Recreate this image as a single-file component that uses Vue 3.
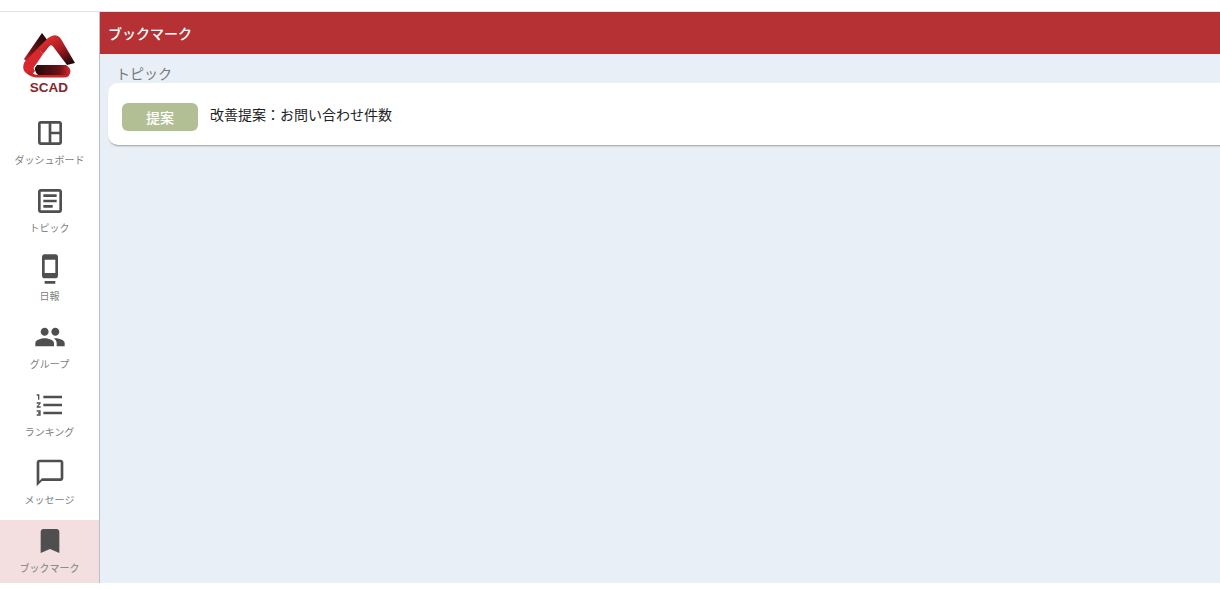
<template>
  <div class="page">
    <div class="top-strip"></div>
    <div class="main">
      <nav class="sidebar">
        <div class="logo">
          <svg class="logo-mark" viewBox="0 0 54 46" width="54" height="46">
            <defs>
              <linearGradient id="leftEar" x1="0.7" y1="0" x2="0.2" y2="1">
                <stop offset="0" stop-color="#1f070a" />
                <stop offset="0.6" stop-color="#6e1218" />
                <stop offset="1" stop-color="#c8242a" />
              </linearGradient>
              <linearGradient id="rightBand" x1="0.2" y1="0.1" x2="0.9" y2="0.9">
                <stop offset="0" stop-color="#e0302f" />
                <stop offset="0.5" stop-color="#a81c22" />
                <stop offset="1" stop-color="#24090c" />
              </linearGradient>
              <linearGradient id="lowerBand" x1="0" y1="0" x2="1" y2="0">
                <stop offset="0" stop-color="#24090c" />
                <stop offset="0.7" stop-color="#6d1218" />
                <stop offset="1" stop-color="#d8292d" />
              </linearGradient>
            </defs>
            <path d="M19 0 L1 26 L6 31 L25 8 Z" fill="url(#leftEar)" />
            <path d="M25 5 Q33 -1 38 6 L52 30 L44 32 L30 13.500 Q28 11 26 13.500 L20 21 L15 15 Z" fill="url(#rightBand)" />
            <path d="M15 15 L20 21 L14 30 L11 34 Q10 36 12 38 L8 43 Q-3 39 1.500 29 Z" fill="#d6282e" />
            <path d="M14 32 L43 32 Q49 36 47 40 Q46 43 43 43 L16 43 Q9 37 14 32 Z" fill="url(#lowerBand)" />
            <path d="M7 38 Q10 42 16 42 L43 42 Q46 42 47 39 Q47 44.500 41 44.500 L13 44.500 Q8 44 4 40 Z" fill="#c92428" />
          </svg>
          <span class="logo-text">SCAD</span>
        </div>
        <a
          v-for="item in navItems"
          :key="item.label"
          class="nav-item"
          :class="{ active: item.active }"
        >
          <svg class="nav-icon" viewBox="0 0 24 24" width="32" height="32">
            <path :d="item.icon" />
          </svg>
          <span class="nav-label">{{ item.label }}</span>
        </a>
      </nav>
      <div class="content">
        <header class="title-bar">ブックマーク</header>
        <div class="section-label">トピック</div>
        <div class="topic-card">
          <span class="badge">提案</span>
          <span class="topic-title">改善提案：お問い合わせ件数</span>
        </div>
      </div>
    </div>
  </div>
</template>

<script setup>
const navItems = [
  {
    label: 'ダッシュボード',
    icon: 'M19 3H5c-1.1 0-2 .9-2 2v14c0 1.100.9 2 2 2h14c1.100 0 2-.9 2-2V5c0-1.100-.9-2-2-2zM5 19V5h6v14H5zm14 0h-6v-6h6v6zm0-8h-6V5h6v6z'
  },
  {
    label: 'トピック',
    icon: 'M19 5v14H5V5h14m0-2H5c-1.100 0-2 .9-2 2v14c0 1.100.9 2 2 2h14c1.100 0 2-.9 2-2V5c0-1.100-.9-2-2-2zM14 17H7v-2h7v2zm3-4H7v-2h10v2zm0-4H7V7h10v2z'
  },
  {
    label: '日報',
    icon: 'M8 23h8v-2H8v2zm8-21.990L8 1c-1.100 0-2 .9-2 2v14c0 1.100.9 2 2 2h8c1.100 0 2-.9 2-2V3c0-1.100-.9-1.990-2-1.990zM16 15H8V5h8v10z'
  },
  {
    label: 'グループ',
    icon: 'M16 11c1.660 0 2.990-1.340 2.990-3S17.660 5 16 5c-1.660 0-3 1.340-3 3s1.340 3 3 3zm-8 0c1.660 0 2.990-1.340 2.990-3S9.660 5 8 5C6.340 5 5 6.340 5 8s1.340 3 3 3zm0 2c-2.330 0-7 1.170-7 3.500V19h14v-2.500c0-2.330-4.670-3.500-7-3.500zm8 0c-.29 0-.62.02-.97.05 1.160.84 1.970 1.970 1.970 3.450V19h6v-2.500c0-2.330-4.670-3.500-7-3.500z'
  },
  {
    label: 'ランキング',
    icon: 'M2 17h2v.5H3v1h1v.5H2v1h3v-4H2v1zm1-9h1V4H2v1h1v3zm-1 3h1.800L2 13.100v.9h3v-1H3.200L5 10.900V10H2v1zm5-6v2h14V5H7zm0 14h14v-2H7v2zm0-6h14v-2H7v2z'
  },
  {
    label: 'メッセージ',
    icon: 'M20 2H4c-1.100 0-2 .9-2 2v18l4-4h14c1.100 0 2-.9 2-2V4c0-1.100-.9-2-2-2zm0 14H6l-2 2V4h16v12z'
  },
  {
    label: 'ブックマーク',
    active: true,
    icon: 'M17 3H7c-1.100 0-1.990.9-1.990 2L5 21l7-3 7 3V5c0-1.100-.9-2-2-2z'
  }
]
</script>

<style>
html,
body {
  margin: 0;
  background: #fff;
  overflow: hidden;
}
</style>

<style scoped>
.page {
  height: 589px;
  overflow: hidden;
  background: #fff;
  font-family: "Noto Sans CJK JP", "Noto Sans", sans-serif;
}

.top-strip {
  height: 11px;
  border-bottom: 1px solid #e3e3e3;
}

.main {
  display: flex;
  height: 571px;
  overflow: hidden;
}

.sidebar {
  flex: 0 0 99px;
  border-right: 1px solid #bcc0c6;
  display: flex;
  flex-direction: column;
  overflow: hidden;
}

.logo {
  flex: 0 0 100px;
  display: flex;
  flex-direction: column;
  align-items: center;
  padding-top: 21px;
  box-sizing: border-box;
}

.logo-mark {
  display: block;
  margin-left: 1px;
}

.logo-text {
  margin: 1px 1px 0 0;
  font-family: "Liberation Sans", sans-serif;
  font-size: 13.500px;
  line-height: 15px;
  font-weight: 700;
  color: #84262c;
}

.nav-item {
  flex: 0 0 68px;
  display: flex;
  flex-direction: column;
  align-items: center;
  padding-top: 5px;
  box-sizing: border-box;
}

.nav-item.active {
  background: #f3dfe0;
}

.nav-icon {
  display: block;
  fill: #4f4f4f;
}

.nav-label {
  margin-top: 4px;
  font-size: 10px;
  line-height: 14px;
  color: #808080;
}

.content {
  flex: 1;
  min-width: 0;
  background: #e9eff7;
}

.title-bar {
  height: 42px;
  padding-left: 8px;
  background: #b53133;
  color: #fff;
  font-size: 14px;
  font-weight: 500;
  line-height: 42px;
}

.section-label {
  height: 29px;
  padding: 10px 0 0 16px;
  box-sizing: border-box;
  color: #75787e;
  font-size: 14px;
  line-height: 19px;
}

.topic-card {
  display: flex;
  align-items: flex-start;
  gap: 12px;
  height: 62px;
  margin: 0 -10px 0 8px;
  padding: 20px 0 0 14px;
  box-sizing: border-box;
  background: #fff;
  border-radius: 10px;
  box-shadow: 0 2px 2px -1px rgba(0, 0, 0, 0.35);
}

.badge {
  width: 76px;
  height: 28px;
  border-radius: 6px;
  background: #b2bf95;
  color: #fff;
  font-size: 14px;
  font-weight: 500;
  line-height: 28px;
  text-align: center;
}

.topic-title {
  margin-top: 1px;
  color: #222;
  font-size: 14px;
  line-height: 20px;
}
</style>
